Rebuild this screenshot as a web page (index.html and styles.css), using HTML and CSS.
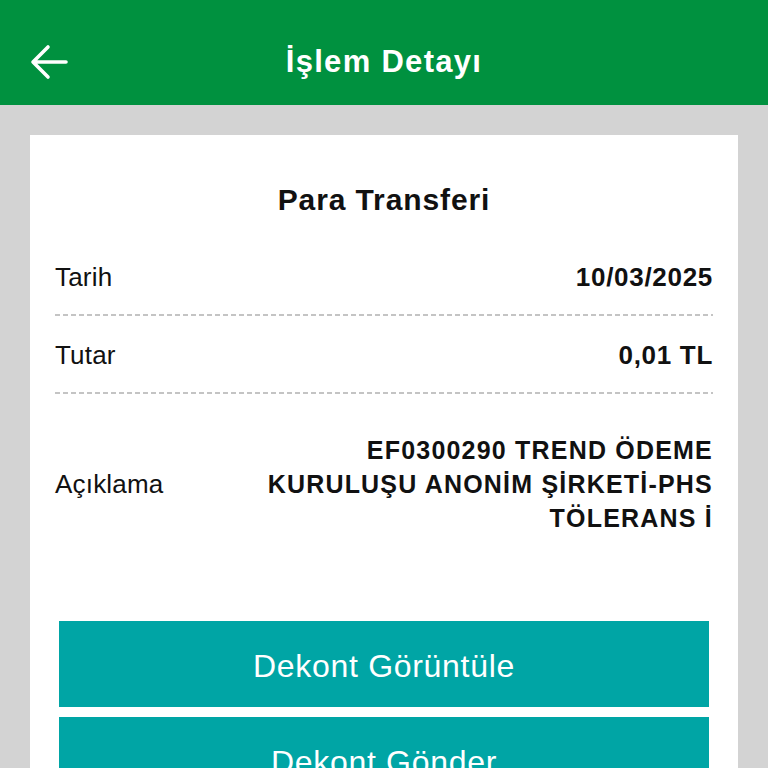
FILE: index.html
```html
<!DOCTYPE html>
<html lang="tr">
<head>
<meta charset="utf-8">
<link rel="stylesheet" href="styles.css">
</head>
<body>
<header class="topbar">
  <svg class="back" viewBox="0 0 40 40" width="40" height="40">
    <path d="M37 20 H5 M19 5 L4 20 L19 35" fill="none" stroke="#fff" stroke-width="3.6" stroke-linecap="round" stroke-linejoin="round"/>
  </svg>
  <h1 class="topbar-title">İşlem Detayı</h1>
</header>
<main class="page">
  <section class="card">
    <h2 class="card-title">Para Transferi</h2>
    <div class="row">
      <span class="label">Tarih</span>
      <span class="value">10/03/2025</span>
    </div>
    <div class="dash"></div>
    <div class="row">
      <span class="label">Tutar</span>
      <span class="value">0,01 TL</span>
    </div>
    <div class="dash"></div>
    <div class="row row-multi">
      <span class="label">Açıklama</span>
      <span class="value value-multi">EF0300290 TREND ÖDEME<br>KURULUŞU ANONİM ŞİRKETİ-PHS<br>TÖLERANS İ</span>
    </div>
    <div class="actions">
      <button class="btn">Dekont Görüntüle</button>
      <button class="btn">Dekont Gönder</button>
    </div>
  </section>
</main>
</body>
</html>
```
FILE: styles.css
```css
html, body {
  margin: 0;
  padding: 0;
  background: #d3d3d3;
  font-family: "Liberation Sans", Arial, sans-serif;
  color: #111;
  overflow: hidden;
  height: 768px;
}
.topbar {
  position: relative;
  height: 105px;
  background: #00913f;
  display: flex;
  align-items: center;
  justify-content: center;
}
.back {
  position: absolute;
  left: 29px;
  top: 42px;
}
.topbar-title {
  margin: 18px 0 0 0;
  color: #fff;
  font-size: 31px;
  font-weight: 700;
  letter-spacing: 1.3px;
}
.page {
  padding: 30px 30px 0 30px;
}
.card {
  background: #fff;
  padding: 47px 25px 40px 25px;
  min-height: 700px;
}
.card-title {
  margin: 0 0 20px 0;
  text-align: center;
  font-size: 30px;
  line-height: 36px;
  font-weight: 700;
  letter-spacing: 0.9px;
}
.row {
  display: flex;
  justify-content: space-between;
  align-items: center;
  padding: 24px 0 22px 0;
  font-size: 26px;
  line-height: 30px;
}
.label {
  font-weight: 400;
  letter-spacing: 0.2px;
}
.value {
  font-weight: 700;
  text-align: right;
  font-size: 26px;
  letter-spacing: 0.7px;
}
.row-multi {
  padding: 39px 0 0 0;
}
.value-multi {
  line-height: 34px;
  font-size: 25px;
  letter-spacing: 1.2px;
}
.dash {
  height: 2px;
  background: repeating-linear-gradient(to right, #c4c4c4 0 5px, transparent 5px 8px);
}
.actions {
  margin: 86px 4px 0 4px;
  display: flex;
  flex-direction: column;
  gap: 10px;
}
.btn {
  height: 86px;
  border: none;
  background: #00a5a5;
  color: #fff;
  font-family: "Liberation Sans", Arial, sans-serif;
  font-size: 32px;
  letter-spacing: 0.7px;
  padding: 4px 0 0 0;
}
```
